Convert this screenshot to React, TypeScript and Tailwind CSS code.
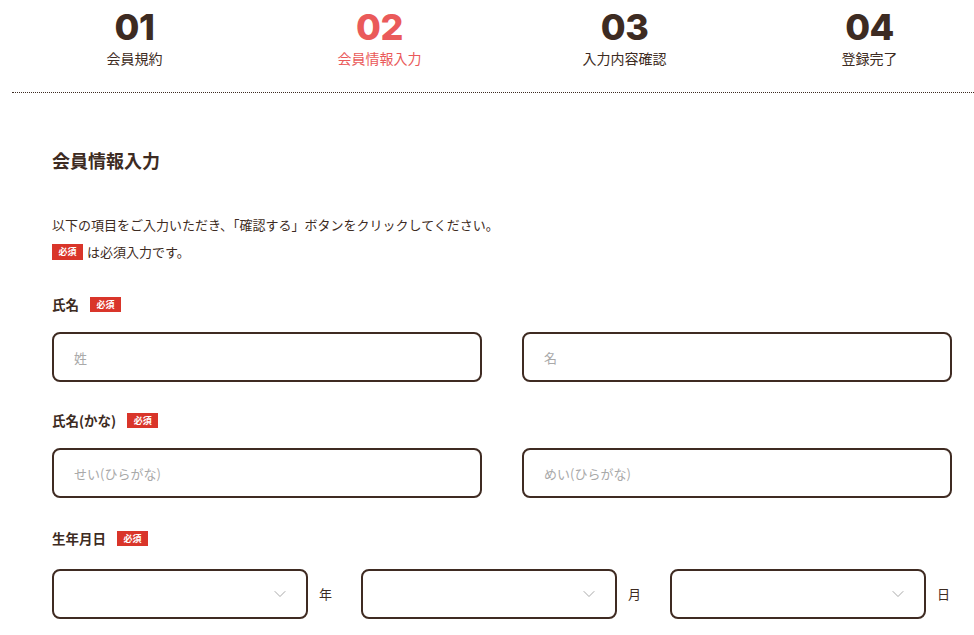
import { ChevronDown } from "lucide-react";

const steps = [
  { num: "01", label: "会員規約", active: false },
  { num: "02", label: "会員情報入力", active: true },
  { num: "03", label: "入力内容確認", active: false },
  { num: "04", label: "登録完了", active: false },
];

const jp = { fontFamily: '"Noto Sans CJK JP", "Noto Sans", sans-serif' };

function Badge({ className = "" }: { className?: string }) {
  return (
    <span
      className={`inline-flex h-[15px] w-[31px] items-center justify-center bg-[#d9352a] text-[9px] font-bold leading-none text-white ${className}`}
    >
      必須
    </span>
  );
}

function FieldLabel({ text }: { text: string }) {
  return (
    <div className="flex h-5 items-center gap-[11px]">
      <span className="text-[13.5px] font-bold">{text}</span>
      <Badge />
    </div>
  );
}

function TextInput({ placeholder }: { placeholder: string }) {
  return (
    <input
      placeholder={placeholder}
      className="h-[50px] w-full rounded-[8px] border-2 border-[#3f2b22] px-5 text-[13px] placeholder:text-[#a9a9a9] outline-none"
    />
  );
}

function DateSelect({ unit }: { unit: string }) {
  return (
    <div className="flex items-center gap-[11px]">
      <div className="relative w-[256px]">
        <select className="h-[50px] w-full appearance-none rounded-[8px] border-2 border-[#3f2b22] bg-white px-5 text-[13px] outline-none">
          <option value=""></option>
        </select>
        <ChevronDown
          className="pointer-events-none absolute right-[18px] top-1/2 h-5 w-5 -translate-y-1/2 text-[#a0a0a0]"
          strokeWidth={1.1}
        />
      </div>
      <span className="w-[13px] text-[13px]">{unit}</span>
    </div>
  );
}

export default function App() {
  return (
    <div className="w-[974px] h-[635px] overflow-hidden bg-white text-[#3d2b22]" style={jp}>
      <div className="ml-3 w-[980px]">
        {/* Steps */}
        <div className="grid grid-cols-4 border-b border-dotted border-[#3d2b22] pt-[8px] pb-[24px]">
          {steps.map((s) => (
            <div
              key={s.num}
              className={`flex flex-col items-center ${s.active ? "text-[#ea5a5a]" : "text-[#3d2b22]"}`}
            >
              <span
                className="text-[36px] font-extrabold leading-[38px] tracking-[-0.5px]"
                style={{ fontFamily: 'Inter, "Noto Sans", sans-serif' }}
              >
                {s.num}
              </span>
              <span className="mt-[2px] text-[14px] leading-5">{s.label}</span>
            </div>
          ))}
        </div>

        {/* Form */}
        <div className="w-[940px] pl-10 pt-[55px]">
          <h2 className="text-[18px] font-bold leading-[25px]">会員情報入力</h2>

          <div className="mt-[38px] text-[13px] leading-[27px]">
            <p>以下の項目をご入力いただき、「確認する」ボタンをクリックしてください。</p>
            <p className="flex items-center gap-[4px]">
              <Badge className="h-[16px] w-[30px]" />
              は必須入力です。
            </p>
          </div>

          <div className="mt-[29px]">
            <FieldLabel text="氏名" />
            <div className="mt-[18px] grid w-[900px] grid-cols-2 gap-10">
              <TextInput placeholder="姓" />
              <TextInput placeholder="名" />
            </div>
          </div>

          <div className="mt-[28px]">
            <FieldLabel text="氏名(かな)" />
            <div className="mt-[18px] grid w-[900px] grid-cols-2 gap-10">
              <TextInput placeholder="せい(ひらがな)" />
              <TextInput placeholder="めい(ひらがな)" />
            </div>
          </div>

          <div className="mt-[30px]">
            <FieldLabel text="生年月日" />
            <div className="mt-[21px] flex gap-[29px]">
              <DateSelect unit="年" />
              <DateSelect unit="月" />
              <DateSelect unit="日" />
            </div>
          </div>
        </div>
      </div>
    </div>
  );
}
